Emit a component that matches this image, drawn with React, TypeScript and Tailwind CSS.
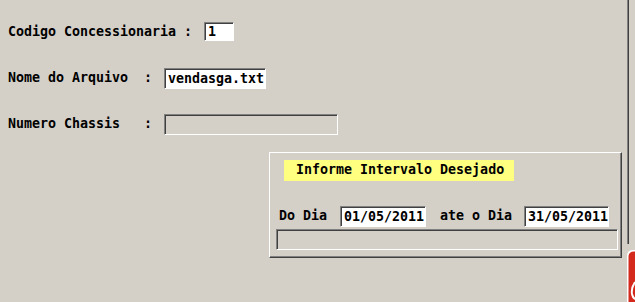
const mono = "font-['DejaVu_Sans_Mono','Liberation_Mono',monospace] font-bold text-[13.3px] text-black";

const sunken =
  'border border-t-[#808080] border-l-[#808080] border-b-white border-r-white shadow-[inset_1px_1px_0_#404040]';

function Field({ value, className }: { value?: string; className: string }) {
  return (
    <div className={`${sunken} ${className} flex items-center pl-[3px] leading-none`}>
      {value}
    </div>
  );
}

export default function App() {
  return (
    <div className={`${mono} w-[635px] h-[302px] bg-[#d4d0c8] flex overflow-hidden`}>
      <div className="w-[627px] flex flex-col">
        <div className="mt-[22px] ml-[8px] flex items-center">
          <span className="w-[196px] whitespace-pre">Codigo Concessionaria :</span>
          <Field value="1" className="w-[30px] h-[19px] bg-white" />
        </div>
        <div className="mt-[26px] ml-[8px] flex items-center">
          <span className="w-[156px] whitespace-pre">Nome do Arquivo  :</span>
          <Field value="vendasga.txt" className="w-[102px] h-[21px] bg-white" />
        </div>
        <div className="mt-[25px] ml-[8px] flex items-center">
          <span className="w-[156px] whitespace-pre">Numero Chassis   :</span>
          <Field className="w-[174px] h-[21px]" />
        </div>

        <div className="mt-[17px] ml-[269px] w-[353px] h-[106px] border border-t-white border-l-white border-b-[#404040] border-r-[#404040] shadow-[inset_-1px_-1px_0_#808080] flex flex-col">
          <div className="mt-[7px] ml-[14px] w-[230px] h-[21px] bg-[#ffff80] flex items-center pl-[12px]">
            Informe Intervalo Desejado
          </div>
          <div className="mt-[25px] ml-[9px] flex items-center">
            <span className="w-[61px]">Do Dia</span>
            <Field value="01/05/2011" className="w-[86px] h-[21px] bg-white" />
            <span className="ml-[14px] w-[84px]">ate o Dia</span>
            <Field value="31/05/2011" className="w-[85px] h-[21px] bg-white" />
          </div>
          <div className={`${sunken} mt-[2px] ml-[6px] w-[342px] h-[21px]`} />
        </div>
      </div>

      <div className="w-[8px] flex flex-col">
        <div className="h-[244px] w-[2px] border-l border-l-[#808080] bg-[#404040]" />
        <svg className="mt-[6px]" width="8" height="52" viewBox="0 0 8 52">
          <path d="M0 52 V6 Q0 0 6 0 H8 V52 Z" fill="#ffffff" />
          <path d="M1.5 52 V7 Q1.5 1.5 7 1.5 H8 V52 Z" fill="#d42a1e" />
          <path d="M8 32 Q4 38 5 44 Q6 48 8 49" fill="none" stroke="#ffffff" strokeWidth="2" />
        </svg>
      </div>
    </div>
  );
}
